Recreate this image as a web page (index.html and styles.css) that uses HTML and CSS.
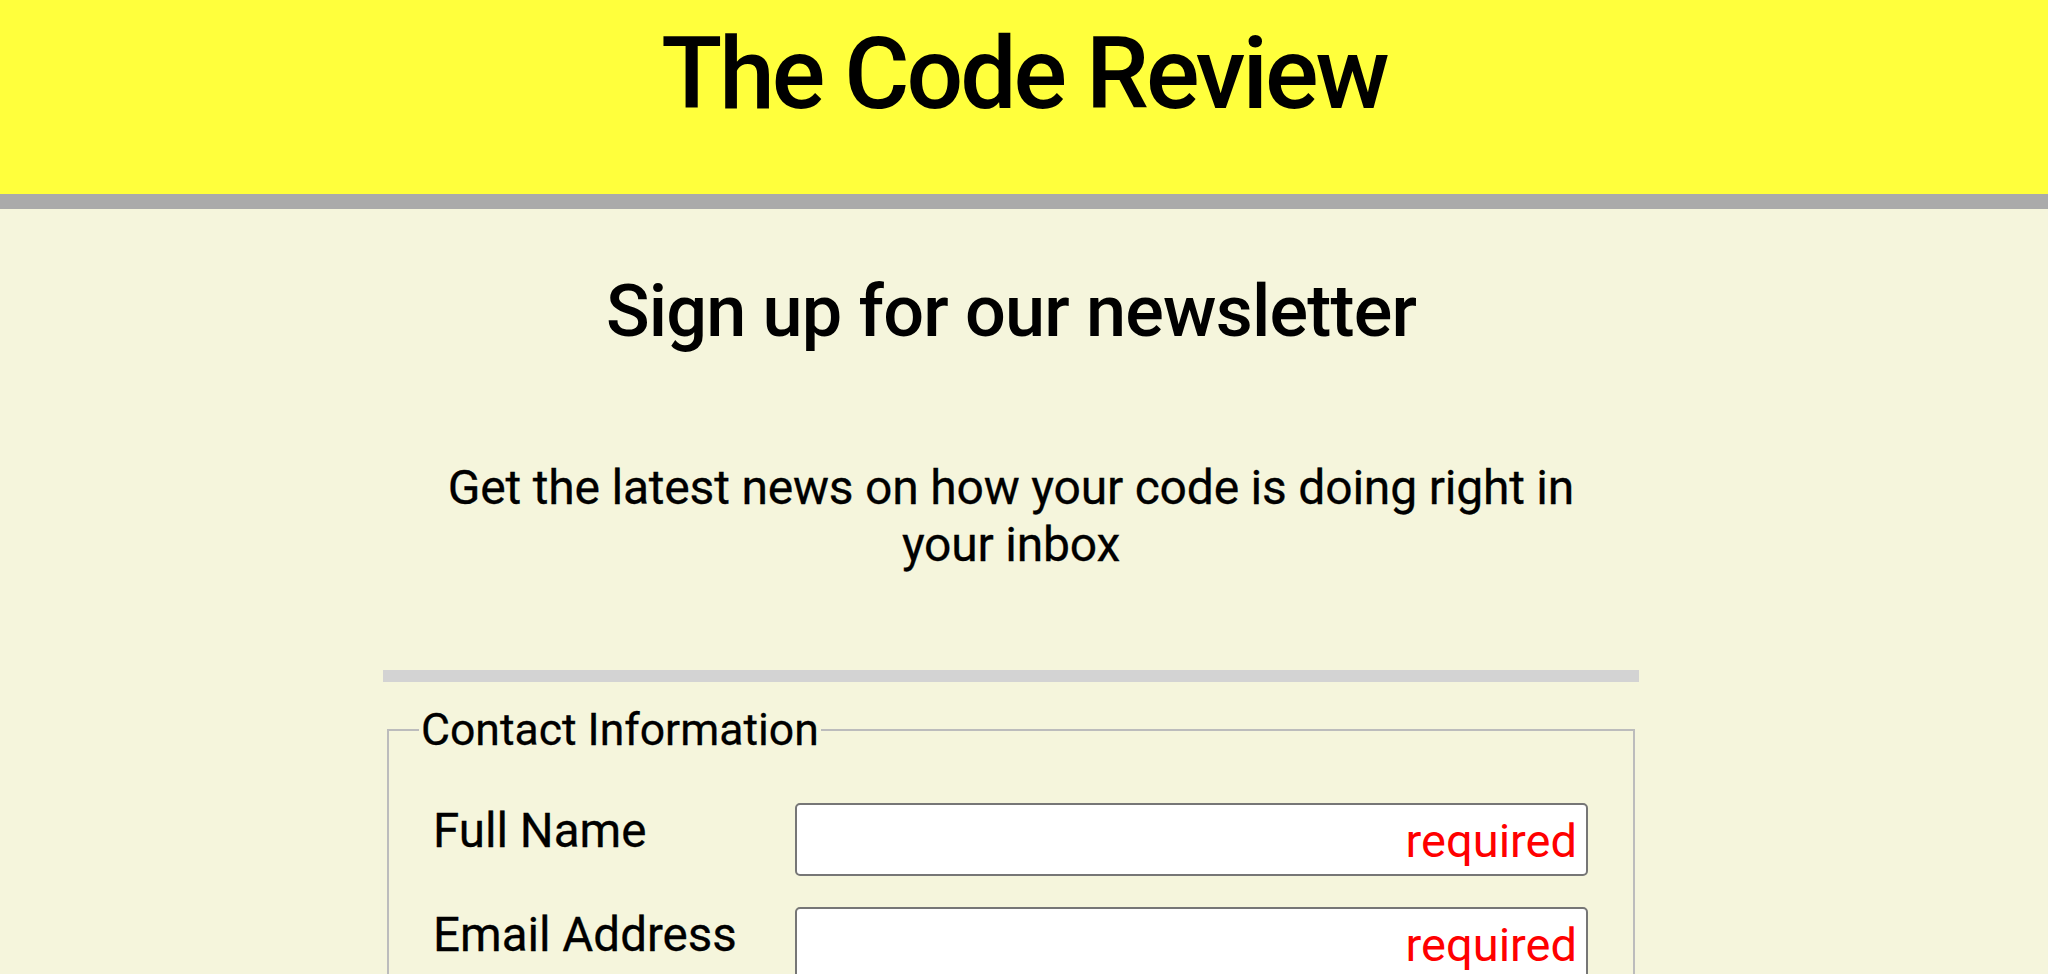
FILE: index.html
```html
<!DOCTYPE html>
<html lang="en">
<head>
<meta charset="utf-8">
<title>The Code Review</title>
<link rel="stylesheet" href="styles.css">
</head>
<body>
<header class="masthead">
  <h1 class="masthead-title">The Code Review</h1>
</header>
<main class="page">
  <h2 class="page-heading">Sign up for our newsletter</h2>
  <p class="lead">Get the latest news on how your code is doing right in your inbox</p>
  <hr class="divider">
  <form class="signup">
    <fieldset class="group">
      <legend class="group-title">Contact Information</legend>
      <div class="row">
        <label class="row-label" for="name">Full Name</label>
        <div class="field">
          <input class="field-input" id="name" type="text">
          <span class="field-note">required</span>
        </div>
      </div>
      <div class="row">
        <label class="row-label" for="email">Email Address</label>
        <div class="field">
          <input class="field-input" id="email" type="email">
          <span class="field-note">required</span>
        </div>
      </div>
    </fieldset>
  </form>
</main>
</body>
</html>
```

FILE: styles.css
```css
html, body {
  margin: 0;
  padding: 0;
}

body {
  background: #f5f5dc;
  font-family: Roboto, "Liberation Sans", sans-serif;
  font-weight: 400;
  color: #000;
}

.masthead {
  background: #ffff3c;
  height: 194px;
  border-bottom: 15px solid #aaaaaa;
  text-align: center;
}

.masthead-title {
  margin: 0;
  padding-top: 15px;
  font-size: 100px;
  font-weight: 500;
  letter-spacing: -3px;
  line-height: normal;
}

.page {
  width: 1256px;
  margin-left: calc(50% - 641px);
  text-align: center;
}

.page-heading {
  margin: 60px 0 0;
  font-size: 72px;
  font-weight: 500;
  letter-spacing: -0.8px;
  line-height: normal;
}

.lead {
  max-width: 1170px;
  margin: 105px auto 0;
  font-size: 48px;
  letter-spacing: -0.2px;
  line-height: normal;
  -webkit-text-stroke: 0.3px #000;
}

.divider {
  margin: 97px 0 0;
  height: 12px;
  border: 0;
  background: #d3d3d3;
}

.signup {
  margin: 0;
  padding-top: 22px;
  text-align: left;
}

.group {
  margin: 0 4px;
  padding: 0 45px 40px 0;
  border: 2px solid #bcbcbc;
}

.group-title {
  margin-left: 30px;
  padding: 0 2px;
  font-size: 44.5px;
  line-height: normal;
  -webkit-text-stroke: 0.3px #000;
}

.row {
  display: flex;
  align-items: flex-start;
  padding-left: 44px;
  margin-top: 47px;
}

.row + .row {
  margin-top: 31px;
}

.row-label {
  width: 362px;
  flex: none;
  font-size: 47.5px;
  line-height: normal;
  -webkit-text-stroke: 0.3px #000;
}

.field {
  position: relative;
  flex: 1;
}

.field-input {
  display: block;
  box-sizing: border-box;
  width: 100%;
  height: 73px;
  margin: 0;
  border: 2px solid #767676;
  border-radius: 5px;
  background: #fff;
  font-family: inherit;
  font-size: 46px;
}

.field-note {
  position: absolute;
  right: 11px;
  top: 50%;
  transform: translateY(-50%);
  color: #ff0000;
  font-size: 47px;
  font-weight: 400;
  line-height: normal;
}
```
